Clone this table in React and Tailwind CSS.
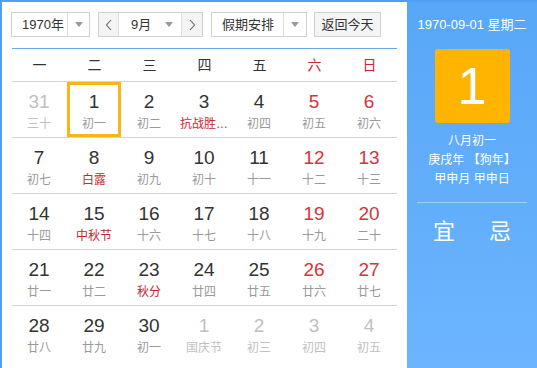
import React from 'react';

const weekdays = ['一', '二', '三', '四', '五', '六', '日'];

// other = outside this month, fest = red lunar/festival text
const rows = [
  [
    { d: 31, l: '三十', other: true },
    { d: 1, l: '初一', sel: true },
    { d: 2, l: '初二' },
    { d: 3, l: '抗战胜…', fest: true },
    { d: 4, l: '初四' },
    { d: 5, l: '初五' },
    { d: 6, l: '初六' },
  ],
  [
    { d: 7, l: '初七' },
    { d: 8, l: '白露', fest: true },
    { d: 9, l: '初九' },
    { d: 10, l: '初十' },
    { d: 11, l: '十一' },
    { d: 12, l: '十二' },
    { d: 13, l: '十三' },
  ],
  [
    { d: 14, l: '十四' },
    { d: 15, l: '中秋节', fest: true },
    { d: 16, l: '十六' },
    { d: 17, l: '十七' },
    { d: 18, l: '十八' },
    { d: 19, l: '十九' },
    { d: 20, l: '二十' },
  ],
  [
    { d: 21, l: '廿一' },
    { d: 22, l: '廿二' },
    { d: 23, l: '秋分', fest: true },
    { d: 24, l: '廿四' },
    { d: 25, l: '廿五' },
    { d: 26, l: '廿六' },
    { d: 27, l: '廿七' },
  ],
  [
    { d: 28, l: '廿八' },
    { d: 29, l: '廿九' },
    { d: 30, l: '初一' },
    { d: 1, l: '国庆节', other: true },
    { d: 2, l: '初三', other: true },
    { d: 3, l: '初四', other: true },
    { d: 4, l: '初五', other: true },
  ],
];

const Caret = () => (
  <span className="w-0 h-0 border-l-[4px] border-r-[4px] border-t-[5px] border-l-transparent border-r-transparent border-t-[#999]" />
);

const Chevron = ({ dir }) => (
  <svg width="8" height="12" viewBox="0 0 8 12" fill="none" stroke="#666" strokeWidth="1.1">
    {dir === 'left' ? <path d="M6 1 L1.5 6 L6 11" /> : <path d="M2 1 L6.5 6 L2 11" />}
  </svg>
);

const Select = ({ label, width, textW }) => (
  <div className={`flex h-[25px] border border-[#d0d0d0] bg-white ${width}`}>
    <div className={`flex items-center pl-[10px] ${textW}`}>{label}</div>
    <div className="flex-1 flex items-center justify-center border-l border-[#e0e0e0]">
      <Caret />
    </div>
  </div>
);

const Cell = ({ c, col }) => {
  const weekend = col >= 5;
  let numCls = 'text-[#333]';
  if (c.other) numCls = 'text-[#c0c0c0]';
  else if (weekend) numCls = 'text-[#d9323b]';
  let lunarCls = 'text-[#999]';
  if (c.other) lunarCls = 'text-[#c0c0c0]';
  else if (c.fest) lunarCls = 'text-[#c9272f]';
  return (
    <div className="flex justify-start">
      <div
        className={`w-[54px] h-[55px] flex flex-col items-center ${
          c.sel ? 'border-[3px] border-[#f4b717] pt-[5px]' : 'pt-[8px]'
        }`}
      >
        <div className={`text-[19px] leading-[24px] ${numCls}`}>{c.d}</div>
        <div className={`text-[12px] leading-[16px] mt-[2px] ${lunarCls}`}>{c.l}</div>
      </div>
    </div>
  );
};

export default function App() {
  return (
    <div
      className="w-[537px] h-[368px] flex border-t-2 border-l-2 border-[#4e9ff5] bg-white overflow-hidden text-[#333]"
      style={{ fontFamily: '"Liberation Sans", Arial, "Noto Sans CJK SC", sans-serif' }}
    >
      <div className="w-[405px] pl-[9px] pt-[10px]">
        <div className="flex items-center text-[13px] gap-[8px]">
          <Select label="1970年" width="w-[79px]" textW="w-[55px]" />
          <div className="flex h-[25px] w-[105px] border border-[#d0d0d0] bg-white">
            <div className="w-[20px] flex items-center justify-center bg-[#f4f4f4] border-r border-[#e0e0e0]">
              <Chevron dir="left" />
            </div>
            <div className="w-[38px] flex items-center pl-[12px]">9月</div>
            <div className="w-[24px] flex items-center justify-center">
              <Caret />
            </div>
            <div className="flex-1 flex items-center justify-center bg-[#f4f4f4] border-l border-[#e0e0e0]">
              <Chevron dir="right" />
            </div>
          </div>
          <Select label="假期安排" width="w-[96px]" textW="w-[71px]" />
          <div className="h-[25px] w-[67px] ml-[-1px] flex items-center justify-center border border-[#d0d0d0] bg-[#f5f5f5]">
            返回今天
          </div>
        </div>

        <div className="ml-[1px] w-[385px] mt-[11px] border-t border-[#6aaae8]">
          <div className="grid grid-cols-7 h-[33px] items-center border-b border-[#d4d4d4] text-[14px]">
            {weekdays.map((w, i) => (
              <div key={w} className={`text-center ${i >= 5 ? 'text-[#c9272f]' : 'text-[#333]'}`}>
                {w}
              </div>
            ))}
          </div>
          {rows.map((r, ri) => (
            <div key={ri} className={`grid grid-cols-7 ${ri < 4 ? 'border-b border-[#d4d4d4]' : ''}`}>
              {r.map((c, ci) => (
                <Cell key={ci} c={c} col={ci} />
              ))}
            </div>
          ))}
        </div>
      </div>

      <div className="flex-1 flex flex-col items-center bg-gradient-to-b from-[#58a7f8] to-[#6cb4fd] text-white">
        <div className="mt-[15px] text-[13px] leading-[16px]">1970-09-01 星期二</div>
        <div className="mt-[16px] w-[75px] h-[74px] rounded-[3px] bg-[#ffb400] flex items-center justify-center text-[52px] leading-none">
          1
        </div>
        <div className="mt-[9px] text-[12px] leading-[19px] text-center">
          <div>八月初一</div>
          <div>庚戌年 【狗年】</div>
          <div>甲申月 甲申日</div>
        </div>
        <div className="mt-[13px] w-[110px] border-t border-[#9fcdfc]" />
        <div className="mt-[15px] flex gap-[34px] text-[22px] leading-[28px]">
          <span>宜</span>
          <span>忌</span>
        </div>
      </div>
    </div>
  );
}
